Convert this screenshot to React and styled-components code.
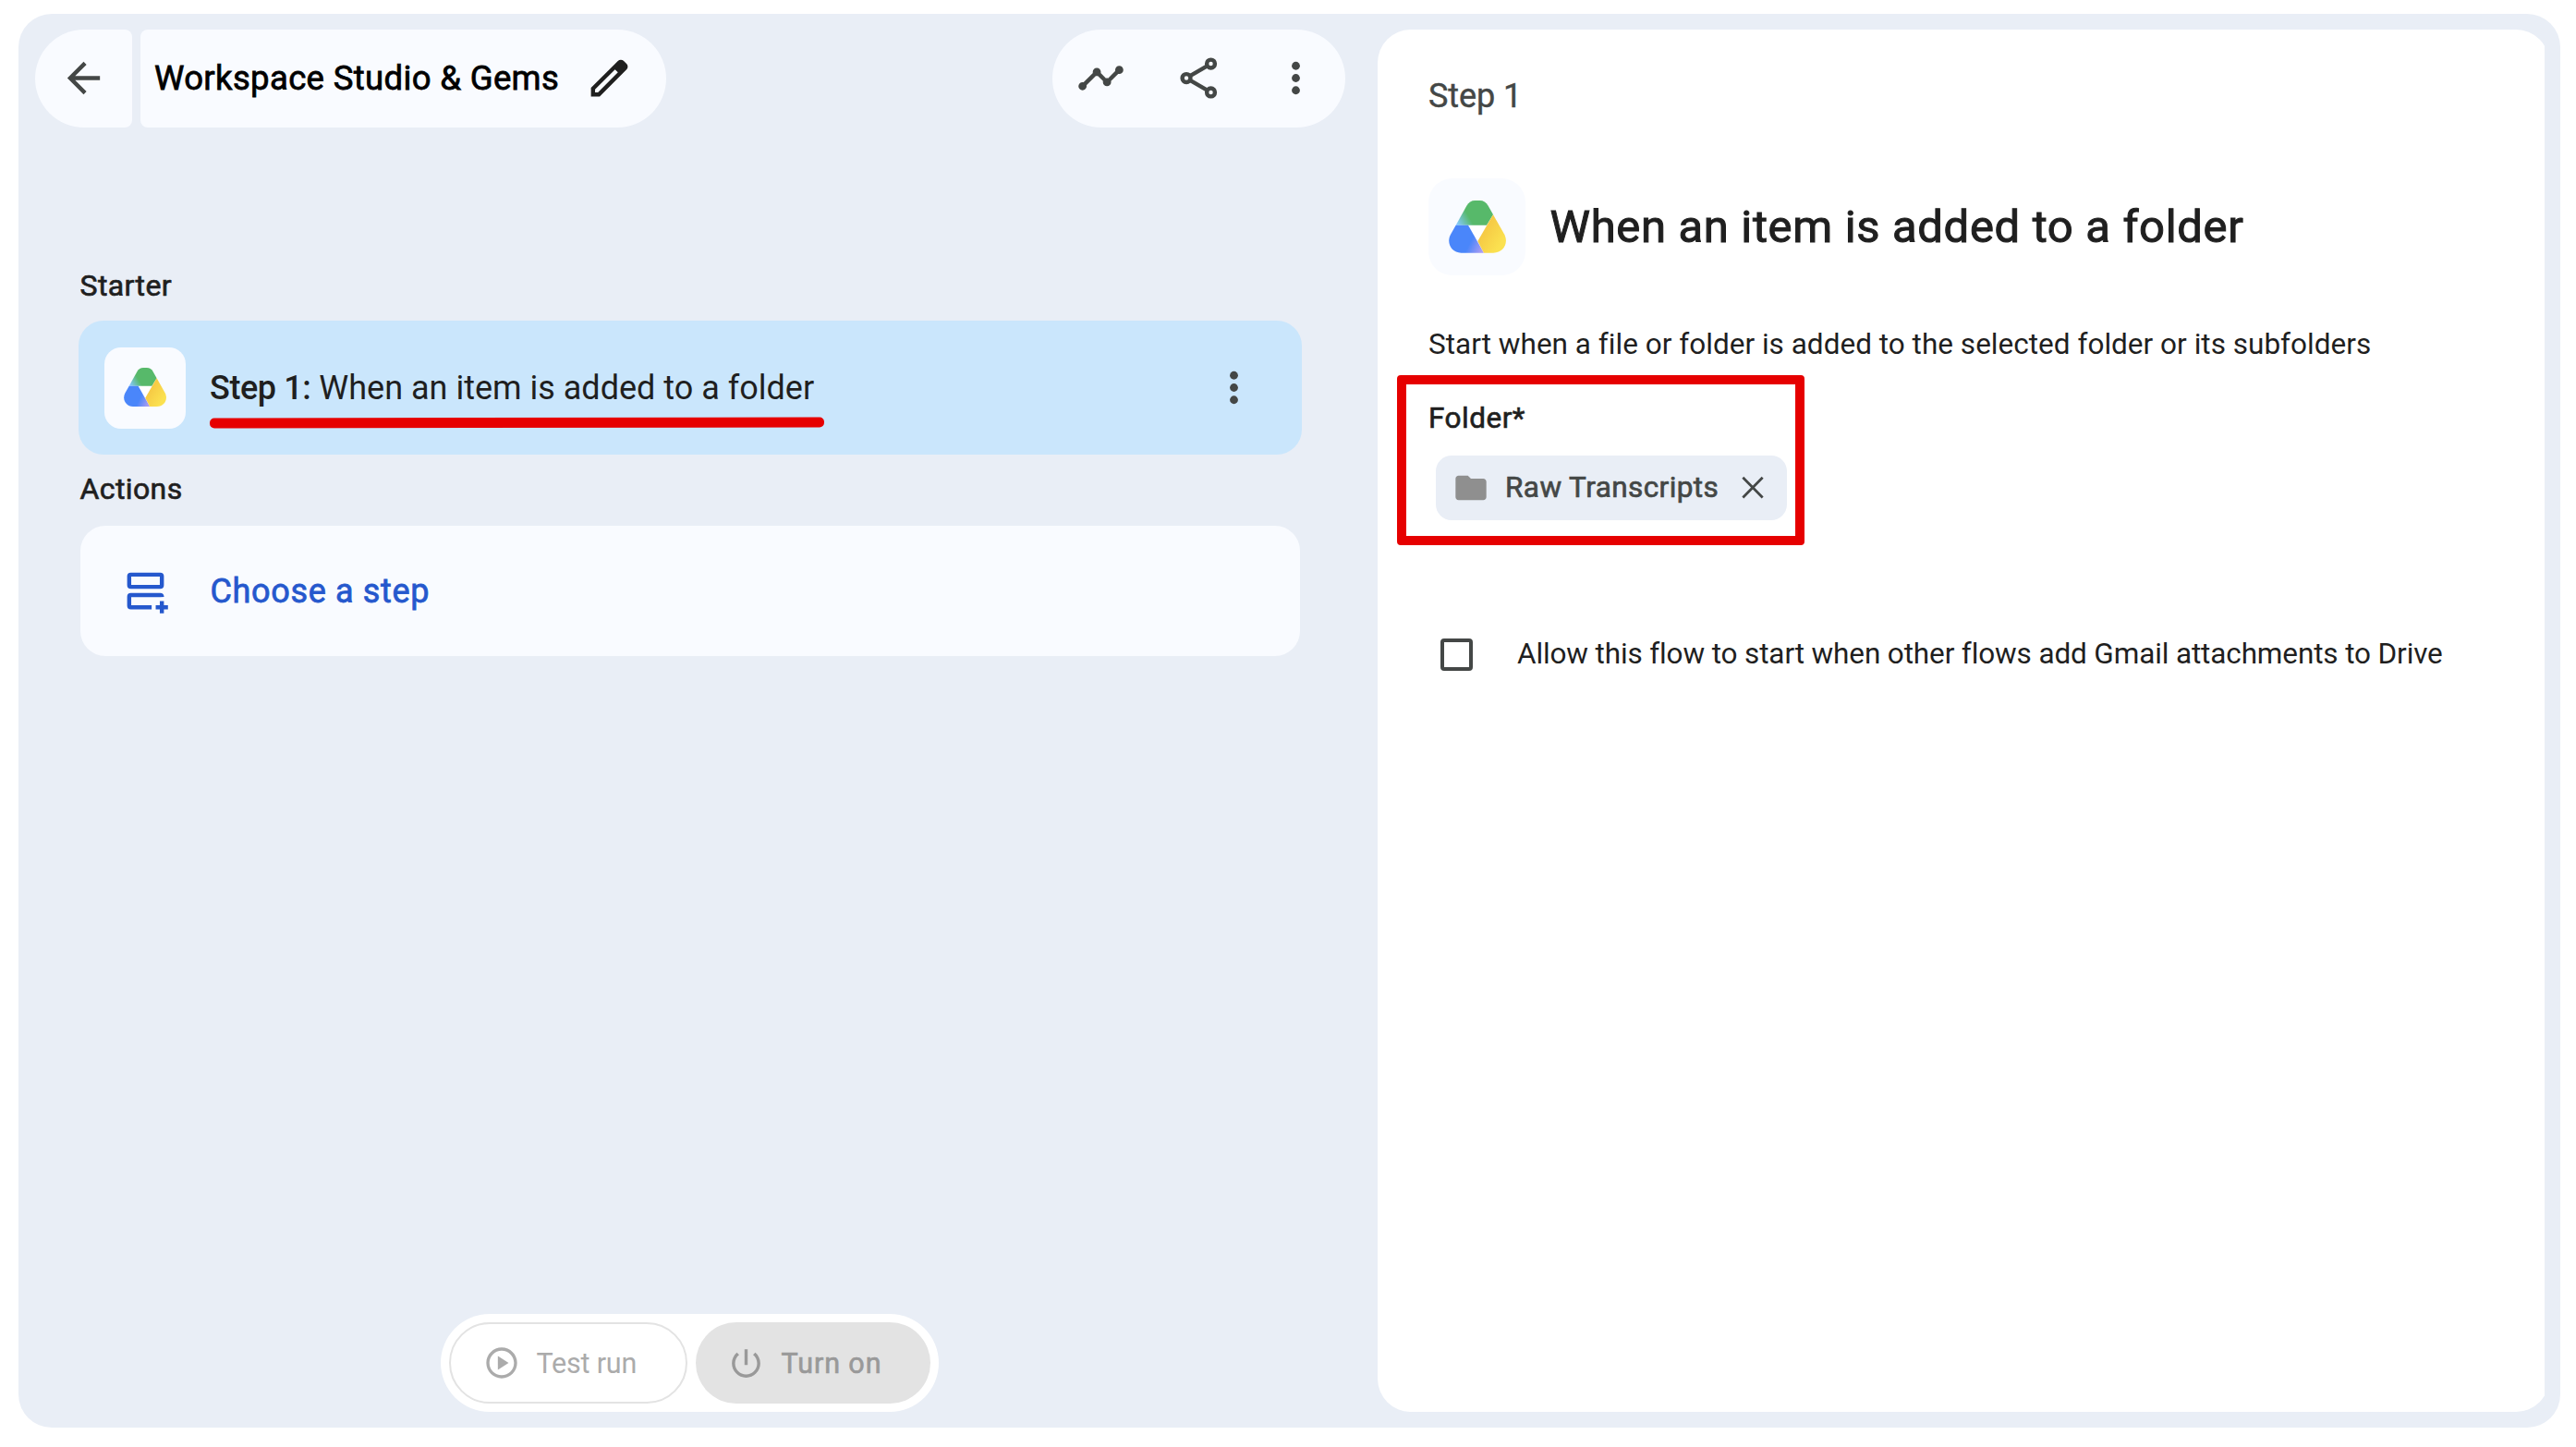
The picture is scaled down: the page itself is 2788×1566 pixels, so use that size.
import React, { useId } from "react";
import styled, { createGlobalStyle, css } from "styled-components";

const GlobalStyle = createGlobalStyle`
  *, *::before, *::after { box-sizing: border-box; }
  body {
    margin: 0;
    background: #ffffff;
    color: #1f1f1f;
    font-family: Roboto, "Open Sans", sans-serif;
  }
  button { font: inherit; color: inherit; background: none; border: 0; padding: 0; margin: 0; }
  svg { display: block; flex: none; }
`;

/* A soft medium weight, between regular and 500. */
const mediumText = css`
  font-weight: 450;
  -webkit-text-stroke: 0.021em currentColor;
`;

const Shell = styled.div`
  display: flex;
  width: 2751px;
  height: 1530px;
  margin: 15px 17px 21px 20px;
  border-radius: 36px;
  background: #e9eef6;
`;

const FlowColumn = styled.main`
  display: flex;
  flex-direction: column;
  width: 1471px;
  padding: 17px 35px 17px 18px;
`;

const Toolbar = styled.header`
  display: flex;
  justify-content: space-between;
  height: 106px;
`;

const ToolbarGroup = styled.div`
  display: flex;
  gap: 9px;
`;

const BackButton = styled.button`
  display: flex;
  align-items: center;
  justify-content: center;
  width: 105px;
  padding-bottom: 1px;
  border-radius: 53px 8px 8px 53px;
  background: #f9fbff;
  color: #444746;
`;

const TitlePill = styled.div`
  display: flex;
  align-items: center;
  justify-content: space-between;
  width: 569px;
  padding: 0 35px 1px 15px;
  border-radius: 8px 53px 53px 8px;
  background: #f9fbff;
`;

const FlowTitle = styled.h1`
  ${mediumText}
  margin: 0;
  font-size: 36.5px;
  letter-spacing: 0.35px;
  color: #000000;
  white-space: nowrap;
`;

const ActionPill = styled.div`
  display: flex;
  width: 317px;
  padding-bottom: 1px;
  border-radius: 53px;
  background: #f9fbff;
`;

const ActionButton = styled.button`
  display: flex;
  align-items: center;
  justify-content: center;
  width: 105.6px;
  color: #444746;
`;

const Steps = styled.section`
  display: flex;
  flex-direction: column;
  padding: 151px 47px 0;
`;

const SectionLabel = styled.h2`
  ${mediumText}
  margin: ${(p) => p.$margin};
  font-size: 32px;
  line-height: 40px;
  letter-spacing: 0.4px;
`;

const StepCard = styled.div`
  display: flex;
  align-items: center;
  height: 145px;
  padding: 0 20px 0 28px;
  border-radius: 27px;
  background: #cae6fc;
`;

const EmptyCard = styled.div`
  display: flex;
  align-items: center;
  height: 141px;
  margin: 0 2px;
  padding-left: 26px;
  border-radius: 27px;
  background: #f9fbff;
  color: #2558cd;
`;

const IconTile = styled.div`
  display: flex;
  align-items: center;
  justify-content: center;
  flex: none;
  width: ${(p) => p.$size}px;
  height: ${(p) => p.$size}px;
  border-radius: ${(p) => p.$radius}px;
  background: ${(p) => (p.$plain ? "transparent" : "#f9fbff")};
`;

const StepText = styled.div`
  position: relative;
  margin-left: 26px;
  font-size: 36px;
  white-space: nowrap;
`;

const ChooseText = styled(StepText)`
  ${mediumText}
  margin-left: 26.5px;
  letter-spacing: 0.66px;
`;

const StepNumber = styled.span`
  font-weight: 500;
  letter-spacing: -0.4px;
`;

const Underline = styled.span`
  position: absolute;
  left: 0;
  top: 53px;
  width: 665px;
  height: 10.5px;
  border-radius: 5px;
  background: #e60000;
  transform: rotate(-0.09deg);
`;

const CardMenu = styled.button`
  display: flex;
  margin: 0 27px 0 auto;
  color: #444746;
`;

const Dock = styled.footer`
  display: flex;
  align-self: center;
  gap: 9px;
  margin: auto 1px 0 0;
  width: 539px;
  height: 106px;
  padding: 9px;
  border-radius: 53px;
  background: #ffffff;
`;

const DockButton = styled.button`
  display: flex;
  align-items: center;
  gap: 17.5px;
  height: 88px;
  border-radius: 44px;
  font-size: 30.5px;
  white-space: nowrap;
`;

const TestRunButton = styled(DockButton)`
  width: 258px;
  padding-left: 35px;
  border: 2px solid #e3e3e3;
  color: #ababab;
  letter-spacing: -0.2px;
`;

const TurnOnButton = styled(DockButton)`
  ${mediumText}
  width: 254px;
  padding-left: 34px;
  background: #e3e3e3;
  color: #999999;
  letter-spacing: 0.9px;
`;

const PanelClip = styled.aside`
  width: 1263px;
  height: 1496px;
  margin-top: 17px;
  overflow: hidden;
`;

const Panel = styled.div`
  display: flex;
  flex-direction: column;
  width: 1268px;
  height: 100%;
  padding: 50px 0 0 55px;
  border-radius: 36px;
  background: #ffffff;
`;

const StepCaption = styled.div`
  font-size: 36px;
  line-height: 44px;
  letter-spacing: -0.1px;
  color: #444746;
  -webkit-text-stroke: 0.4px currentColor;
`;

const PanelHeader = styled.div`
  display: flex;
  align-items: center;
  gap: 26.5px;
  margin-top: 67px;
`;

const PanelTitle = styled.h2`
  ${mediumText}
  margin: 0;
  font-size: 49px;
  letter-spacing: 0.66px;
  white-space: nowrap;
`;

const BodyText = styled.p`
  margin: ${(p) => p.$margin || 0};
  font-size: 31.5px;
  line-height: 40px;
  letter-spacing: ${(p) => p.$spacing || 0}px;
  white-space: nowrap;
`;

const FolderField = styled.div`
  position: relative;
  margin-top: 40px;
`;

const FieldLabel = styled.div`
  ${mediumText}
  font-size: 31.5px;
  line-height: 40px;
  letter-spacing: 0.5px;
`;

const Highlight = styled.div`
  position: absolute;
  left: -34px;
  top: -27px;
  width: 441px;
  height: 184px;
  border: 10px solid #e60000;
  border-radius: 4px;
`;

const Chip = styled.div`
  display: flex;
  align-items: center;
  width: 380px;
  height: 70px;
  margin: 20px 0 0 8px;
  padding: 0 17px 0 18px;
  border-radius: 17px;
  background: #e9eef6;
  color: #444746;
`;

const ChipLabel = styled.span`
  ${mediumText}
  margin: -1px auto 0 17px;
  font-size: 31.5px;
  letter-spacing: 0.42px;
  white-space: nowrap;
`;

const CheckRow = styled.label`
  display: flex;
  align-items: center;
  gap: 48px;
  margin: 125px 0 0 13px;
`;

const Checkbox = styled.span`
  width: 35px;
  height: 35px;
  margin-top: 1px;
  border: 4px solid #444746;
  border-radius: 4px;
`;

function Icon({ size = 53, color = "currentColor", children }) {
  return (
    <svg width={size} height={size} viewBox="0 0 24 24" fill={color}>
      {children}
    </svg>
  );
}

const ArrowBack = () => (
  <Icon>
    <path d="M20 11H7.83l5.59-5.59L12 4l-8 8 8 8 1.41-1.41L7.83 13H20v-2z" />
  </Icon>
);

const Pencil = () => (
  <Icon color="#1f1f1f">
    <path
      fillRule="evenodd"
      d="M5 19h1.425L16.2 9.225 14.775 7.8 5 17.575V19zM3 21v-4.25L16.2 3.575q.3-.275.662-.425T17.625 3t.775.15.65.45L20.425 5q.3.275.438.65T21 6.4q0 .4-.138.763t-.437.662L7.25 21H3z"
    />
  </Icon>
);

const Timeline = () => (
  <Icon>
    <path d="M23 8c0 1.1-.9 2-2 2-.18 0-.35-.02-.51-.07l-3.56 3.55c.05.16.07.34.07.52 0 1.1-.9 2-2 2s-2-.9-2-2c0-.18.02-.36.07-.52l-2.55-2.55c-.16.05-.34.07-.52.07s-.36-.02-.52-.07l-4.55 4.56c.05.16.07.33.07.51 0 1.1-.9 2-2 2s-2-.9-2-2 .9-2 2-2c.18 0 .35.02.51.07l4.56-4.55C8.02 9.36 8 9.18 8 9c0-1.1.9-2 2-2s2 .9 2 2c0 .18-.02.36-.07.52l2.55 2.55c.16-.05.34-.07.52-.07s.36.02.52.07l3.55-3.56C19.02 8.35 19 8.18 19 8c0-1.1.9-2 2-2s2 .9 2 2z" />
  </Icon>
);

const Share = () => (
  <Icon color="none">
    <g stroke="currentColor" strokeWidth="2">
      <circle cx="17.9" cy="5" r="2" />
      <circle cx="5.9" cy="12" r="2" />
      <circle cx="17.9" cy="19" r="2" />
      <path d="M7.7 10.95l8.4-4.9M7.7 13.05l8.4 4.9" />
    </g>
  </Icon>
);

const MoreVert = () => (
  <Icon>
    <circle cx="12" cy="6" r="2" />
    <circle cx="12" cy="12" r="2" />
    <circle cx="12" cy="18" r="2" />
  </Icon>
);

const AddStep = () => (
  <Icon color="none">
    <g stroke="currentColor" strokeWidth="2">
      <rect x="4" y="4" width="16" height="6" rx="0.8" />
      <path d="M15 20H4.8a.8.8 0 0 1-.8-.8v-4.4a.8.8 0 0 1 .8-.8H19.2q.8 0 .9 1" />
      <path d="M20 17v6M17 20h6" />
    </g>
  </Icon>
);

const PlayCircle = () => (
  <Icon size={40}>
    <path d="M9.5 16.5l7-4.5-7-4.5v9zM12 22C6.48 22 2 17.52 2 12S6.48 2 12 2s10 4.48 10 10-4.48 10-10 10zm0-2c4.42 0 8-3.58 8-8s-3.58-8-8-8-8 3.58-8 8 3.58 8 8 8z" />
  </Icon>
);

const Power = () => (
  <Icon size={41}>
    <path d="M13 3h-2v10h2V3zm4.83 2.17l-1.42 1.42C17.99 7.86 19 9.81 19 12c0 3.87-3.13 7-7 7s-7-3.13-7-7c0-2.19 1.01-4.14 2.58-5.42L6.17 5.17C4.23 6.82 3 9.26 3 12c0 4.97 4.03 9 9 9s9-4.03 9-9c0-2.74-1.23-5.18-3.17-6.83z" />
  </Icon>
);

const Folder = () => (
  <Icon size={40} color="#8f8f8f">
    <path d="M10 4H4c-1.1 0-1.99.9-1.99 2L2 18c0 1.1.9 2 2 2h16c1.1 0 2-.9 2-2V8c0-1.1-.9-2-2-2h-8l-2-2z" />
  </Icon>
);

const Close = () => (
  <Icon size={40} color="none">
    <path d="M5.6 5.3l12.8 13M18.4 5.3l-12.8 13" stroke="currentColor" strokeWidth="1.65" />
  </Icon>
);

function DriveLogo({ width }) {
  const id = useId();
  return (
    <svg width={width} height={(width * 170) / 186} viewBox="82 81 186 170">
      <defs>
        <linearGradient id={`${id}g`} gradientUnits="userSpaceOnUse" x1="112" y1="160" x2="150" y2="138">
          <stop offset="0" stopColor="#84c8fb" />
          <stop offset="1" stopColor="#57b96a" />
        </linearGradient>
        <linearGradient id={`${id}b`} gradientUnits="userSpaceOnUse" x1="190" y1="245" x2="148" y2="224">
          <stop offset="0" stopColor="#ab9df3" />
          <stop offset="1" stopColor="#4a86fa" />
        </linearGradient>
        <linearGradient id={`${id}y`} gradientUnits="userSpaceOnUse" x1="200" y1="180" x2="255" y2="215">
          <stop offset="0" stopColor="#f6cb45" />
          <stop offset="1" stopColor="#fbe150" />
        </linearGradient>
      </defs>
      <path d="M145 160h60l-29 53z" fill="#ffffff" />
      <path d="M105 161l35-63q10-17 27-17h16q17 0 27 17l16 29-21 34z" fill={`url(#${id}g)`} />
      <path d="M105 161h40l51 90h-74c-31 0-49-32-34-60z" fill={`url(#${id}b)`} />
      <path d="M226 127l36 63c16 29-3 61-35 61h-31l-20-38z" fill={`url(#${id}y)`} />
    </svg>
  );
}

export default function App() {
  return (
    <>
      <GlobalStyle />
      <Shell>
        <FlowColumn>
          <Toolbar>
            <ToolbarGroup>
              <BackButton aria-label="Back">
                <ArrowBack />
              </BackButton>
              <TitlePill>
                <FlowTitle>Workspace Studio &amp; Gems</FlowTitle>
                <Pencil />
              </TitlePill>
            </ToolbarGroup>
            <ActionPill>
              <ActionButton aria-label="Activity">
                <Timeline />
              </ActionButton>
              <ActionButton aria-label="Share">
                <Share />
              </ActionButton>
              <ActionButton aria-label="More">
                <MoreVert />
              </ActionButton>
            </ActionPill>
          </Toolbar>

          <Steps>
            <SectionLabel $margin="0 0 18px 1.5px">Starter</SectionLabel>
            <StepCard>
              <IconTile $size={88} $radius={18}>
                <DriveLogo width={46} />
              </IconTile>
              <StepText>
                <StepNumber>Step 1:</StepNumber> When an item is added to a folder
                <Underline />
              </StepText>
              <CardMenu aria-label="Step options">
                <MoreVert />
              </CardMenu>
            </StepCard>
            <SectionLabel $margin="17px 0 20px 1.5px">Actions</SectionLabel>
            <EmptyCard>
              <IconTile $size={88} $plain>
                <AddStep />
              </IconTile>
              <ChooseText>Choose a step</ChooseText>
            </EmptyCard>
          </Steps>

          <Dock>
            <TestRunButton>
              <PlayCircle />
              Test run
            </TestRunButton>
            <TurnOnButton>
              <Power />
              Turn on
            </TurnOnButton>
          </Dock>
        </FlowColumn>

        <PanelClip>
          <Panel>
            <StepCaption>Step 1</StepCaption>
            <PanelHeader>
              <IconTile $size={105} $radius={26}>
                <DriveLogo width={62} />
              </IconTile>
              <PanelTitle>When an item is added to a folder</PanelTitle>
            </PanelHeader>
            <BodyText $margin="55px 0 0" $spacing={0.02}>
              Start when a file or folder is added to the selected folder or its subfolders
            </BodyText>
            <FolderField>
              <FieldLabel>Folder*</FieldLabel>
              <Chip>
                <Folder />
                <ChipLabel>Raw Transcripts</ChipLabel>
                <Close />
              </Chip>
              <Highlight />
            </FolderField>
            <CheckRow>
              <Checkbox />
              <BodyText $spacing={-0.13}>
                Allow this flow to start when other flows add Gmail attachments to Drive
              </BodyText>
            </CheckRow>
          </Panel>
        </PanelClip>
      </Shell>
    </>
  );
}
